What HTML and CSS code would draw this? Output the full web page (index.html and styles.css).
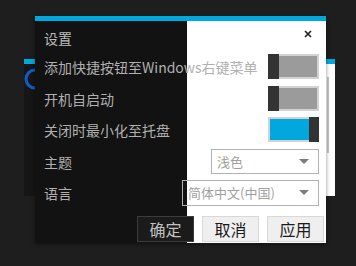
FILE: index.html
```html
<!DOCTYPE html>
<html lang="zh-CN">
<head>
	<meta charset="UTF-8">
	<title>设置</title>
	<link rel="stylesheet" href="styles.css">
</head>
<body>
<div class="desk">
	<!-- 后面的主窗口，只露出左右两条边 -->
	<div class="win-back">
		<div class="win-bar"></div>
		<div class="win-body">
			<div class="back-main">
				<svg class="back-logo" width="22" height="22" viewBox="0 0 22 22"><circle cx="11" cy="11" r="9" fill="none" stroke="#0d5fc4" stroke-width="3"/></svg>
				<svg class="back-mark first" width="5" height="12" viewBox="0 0 5 12"><path d="M2.5 0V12M1 2H4M1 6H4M1 10H4" stroke="#8e8e8e" stroke-width="1.2" fill="none"/></svg>
				<svg class="back-mark" width="5" height="12" viewBox="0 0 5 12"><path d="M2.5 0V12M1 3H4M1 9H4" stroke="#8e8e8e" stroke-width="1.2" fill="none"/></svg>
			</div>
			<div class="back-side"><span class="back-scroll"></span></div>
		</div>
	</div>

	<!-- 设置弹窗 -->
	<div class="dialog">
		<div class="dialog-bar"></div>
		<div class="dialog-body">
			<div class="panel-dark"></div>
			<div class="panel-light"></div>
			<div class="dialog-content">
				<div class="dialog-head">
					<span class="dialog-title">设置</span>
					<button class="close-btn"><svg width="8" height="8" viewBox="0 0 8 8"><path d="M1 1L7 7M7 1L1 7" stroke="#222" stroke-width="1.7"/></svg></button>
				</div>
				<div class="rows">
					<div class="row">
						<span class="label">添加快捷按钮至Windows右键菜单</span>
						<span class="switch"><span class="knob"></span></span>
					</div>
					<div class="row">
						<span class="label">开机自启动</span>
						<span class="switch"><span class="knob"></span></span>
					</div>
					<div class="row">
						<span class="label">关闭时最小化至托盘</span>
						<span class="switch on"><span class="knob"></span></span>
					</div>
					<div class="row">
						<span class="label">主题</span>
						<span class="select theme"><span>浅色</span><i class="arrow"></i></span>
					</div>
					<div class="row">
						<span class="label">语言</span>
						<span class="select lang"><span>简体中文(中国)</span><i class="arrow"></i></span>
					</div>
				</div>
				<div class="actions">
					<button class="btn dark">确定</button>
					<button class="btn">取消</button>
					<button class="btn">应用</button>
				</div>
			</div>
		</div>
	</div>
</div>
</body>
</html>
```

FILE: styles.css
```css
* {
	box-sizing: border-box;
}

body {
	margin: 0;
	background: #1e1e1e;
	font-family: "Noto Sans CJK SC", "Noto Sans", sans-serif;
}

.desk {
	position: relative;
	width: 356px;
	height: 266px;
	overflow: hidden;
}

/* 后面的窗口 */
.win-back {
	position: absolute;
	left: 24px;
	top: 59px;
	width: 311px;
	height: 137px;
	display: flex;
	flex-direction: column;
}

.win-bar {
	height: 5px;
	background: #00a8dd;
}

.win-body {
	flex: 1;
	display: grid;
	grid-template-columns: 1fr 140px;
}

.back-main {
	background: #161616;
	padding-top: 4px;
}

.back-logo {
	display: block;
}

.back-mark {
	display: block;
	margin: 13px 0 0 30px;
}

.back-mark.first {
	margin-top: -2px;
}

.back-side {
	background: #fff;
	display: flex;
	justify-content: flex-end;
	padding: 13px 6px 0 0;
}

.back-scroll {
	width: 2px;
	height: 76px;
	background: #c4c4c4;
}

/* 设置弹窗 */
.dialog {
	position: absolute;
	z-index: 2;
	left: 35px;
	top: 16px;
	width: 291px;
	height: 227px;
	display: flex;
	flex-direction: column;
	box-shadow: 0 1px 4px rgba(0, 0, 0, .45);
}

.dialog-bar {
	height: 5px;
	background: #00a8dd;
}

/* 左侧深色，右侧白色，内容叠在两块上面 */
.dialog-body {
	flex: 1;
	display: grid;
	grid-template-columns: 152px 1fr;
}

.panel-dark {
	grid-area: 1 / 1;
	background: #121212;
}

.panel-light {
	grid-area: 1 / 2;
	background: #fff;
}

.dialog-content {
	grid-area: 1 / 1 / 2 / 3;
	padding: 4px 7px 0 9px;
}

.dialog-head {
	height: 26px;
	display: flex;
	justify-content: space-between;
	align-items: flex-start;
}

.dialog-title {
	font-size: 14px;
	line-height: 26px;
	color: #bcbcbc;
}

.close-btn {
	margin: 5px 7px 0 0;
	padding: 0;
	border: 0;
	background: none;
	width: 8px;
	height: 8px;
}

.close-btn svg {
	display: block;
}

.rows {
	margin-top: 3px;
	display: flex;
	flex-direction: column;
	gap: 6.5px;
}

.row {
	height: 25px;
	display: flex;
	justify-content: space-between;
	align-items: center;
}

.label {
	font-size: 14px;
	line-height: 20px;
	padding-top: 1px;
	color: #b0b0b0;
	white-space: nowrap;
}

.switch {
	position: relative;
	width: 51px;
	height: 25px;
	border: 2px solid #d2d2d2;
	background: #9b9b9b;
}

.switch .knob {
	position: absolute;
	left: -2px;
	top: -2px;
	bottom: -2px;
	width: 11px;
	background: #333;
}

.switch.on {
	background: #00a8dd;
}

.switch.on .knob {
	left: auto;
	right: -2px;
	width: 10px;
}

.select {
	height: 25px;
	display: flex;
	align-items: center;
	border: 1px solid #b2b2b2;
	padding-left: 5px;
	font-size: 13px;
	color: #a0a0a0;
}

.select.theme {
	width: 108px;
}

.select.lang {
	width: 137px;
	height: 26px;
}

.arrow {
	margin-left: auto;
	margin-right: 9px;
	width: 0;
	height: 0;
	border-top: 5px solid #7c7c7c;
	border-left: 5px solid transparent;
	border-right: 5px solid transparent;
}

.actions {
	margin: 10.5px -5px 0 0;
	display: flex;
	justify-content: flex-end;
	gap: 8px;
}

.btn {
	width: 57px;
	height: 26px;
	padding: 0;
	border: 1px solid #d8d8d8;
	background: #efefef;
	font-family: inherit;
	font-size: 16px;
	color: #1a1a1a;
}

.btn.dark {
	background: #1b1b1b;
	border-color: #3c3c3c;
	color: #c0c0c0;
}
```
